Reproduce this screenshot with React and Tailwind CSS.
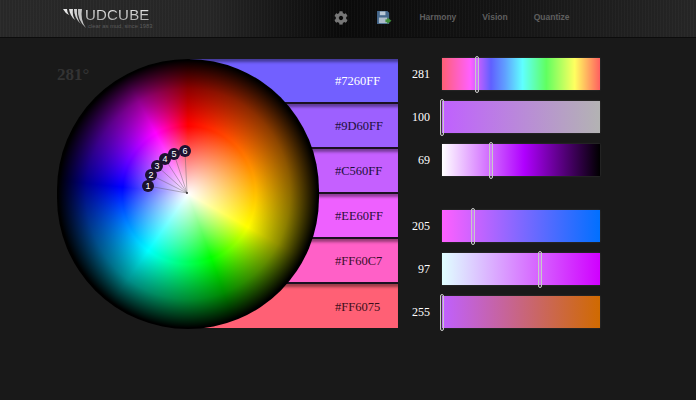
import React from 'react';
import { FaCog } from 'react-icons/fa';

const swatches = [
    { hex: '#7260FF', bg: 'bg-[#7260ff]', text: 'text-white' },
    { hex: '#9D60FF', bg: 'bg-[#9d60ff]', text: 'text-[#1c0f3a]' },
    { hex: '#C560FF', bg: 'bg-[#c560ff]', text: 'text-[#1c0f3a]' },
    { hex: '#EE60FF', bg: 'bg-[#ee60ff]', text: 'text-[#2a0f3a]' },
    { hex: '#FF60C7', bg: 'bg-[#ff60c7]', text: 'text-[#3a0f2a]' },
    { hex: '#FF6075', bg: 'bg-[#ff6075]', text: 'text-[#3a0f1a]' },
];

const sliders = [
    { value: 281, bar: 'bg-[linear-gradient(90deg,#ff6075_0%,#ff60ff_18%,#6060ff_31%,#60a0ff_40%,#60ffff_51%,#60ff60_66%,#ffff60_84%,#ff6060_100%)]', handle: 'ml-[33px]', group: 'mt-[-1px]' },
    { value: 100, bar: 'bg-[linear-gradient(90deg,#c060ff,#b3b3b3)]', handle: 'ml-[-2px]', group: 'mt-[11px]' },
    { value: 69, bar: 'bg-[linear-gradient(90deg,#ffffff_0%,#b000ff_52%,#000000_100%)]', handle: 'ml-[47px]', group: 'mt-[11px]' },
    { value: 205, bar: 'bg-[linear-gradient(90deg,#ff60ff,#0070ff)]', handle: 'ml-[29px]', group: 'mt-[34px]' },
    { value: 97, bar: 'bg-[linear-gradient(90deg,#e0ffff,#d000ff)]', handle: 'ml-[96px]', group: 'mt-[11px]' },
    { value: 255, bar: 'bg-[linear-gradient(90deg,#c060ff,#d06a00)]', handle: 'ml-[-2px]', group: 'mt-[11px]' },
];

const pins = [
    { n: 1, x: 91, y: 127 },
    { n: 2, x: 94, y: 116 },
    { n: 3, x: 100, y: 107 },
    { n: 4, x: 108, y: 100 },
    { n: 5, x: 117, y: 95 },
    { n: 6, x: 128, y: 92 },
];

const navLink = "text-[8.5px] font-bold text-[#5f5f5f] font-['Liberation_Sans',sans-serif]";

const Logo = () => (
    <div className="flex items-start">
        <svg width="23" height="20" viewBox="0 0 23 20" className="mt-[9px] shrink-0">
            <path d="M0 0 L4 0 Q4 3 6 6 Q2 4 0 0 Z" fill="#e8e8e8" />
            <path d="M6 0 L10 0 Q9 6 12 11 Q7 7 6 0 Z" fill="#dedede" />
            <path d="M11 0 L14 0 Q13 9 18 15 Q11 9 11 0 Z" fill="#d2d2d2" />
            <path d="M15 0 L19 0 Q17 11 23 19 Q14 11 15 0 Z" fill="#c2c2c2" />
        </svg>
        <div className="mt-[6px] ml-[-1px]">
            <div className="font-['Liberation_Sans',sans-serif] text-[15px] leading-[17px] tracking-[0.2px] text-transparent bg-clip-text bg-[linear-gradient(180deg,#f6f6f6,#a0a0a0)]">
                UDCUBE
            </div>
            <div className="font-['Liberation_Sans',sans-serif] text-[5.8px] leading-[7px] ml-[3px] text-[#5c5c5c] whitespace-nowrap">
                clear as mud, since 1983
            </div>
        </div>
    </div>
);

const SaveIcon = () => (
    <svg width="15" height="14" viewBox="0 0 16 15">
        <path d="M0 0 H11 L13 2 V14 H0 Z" fill="#46688c" />
        <rect x="3" y="0.5" width="6" height="4" fill="#b9c8d6" />
        <rect x="2" y="7" width="9" height="6" fill="#aebccb" />
        <path d="M11 7 L15.5 10.5 L11 14 Z" fill="#3f8f3a" />
        <rect x="9" y="9" width="3" height="3" fill="#3f8f3a" />
    </svg>
);

const Wheel = () => (
    <div className="absolute left-[57px] top-[21px] w-[262px] h-[270px]">
        <div className="w-full h-full rounded-full [background-image:radial-gradient(closest-side,rgba(255,255,255,1)_0%,rgba(255,255,255,0)_50%,rgba(0,0,0,0)_52%,rgba(0,0,0,0.45)_78%,rgba(0,0,0,1)_99%),conic-gradient(from_0deg_at_50%_50%,#ff0000_0deg,#ff8000_60deg,#ffff00_119deg,#00ff00_160deg,#00ffff_215deg,#0000ff_276deg,#ff00ff_332deg,#ff0000_360deg)]" />
        <svg className="absolute inset-0" width="262" height="270">
            {pins.map((p) => (
                <line key={p.n} x1={p.x} y1={p.y} x2="130" y2="134" stroke="#555" strokeOpacity="0.65" strokeWidth="0.6" />
            ))}
            <circle cx="130" cy="134" r="1" fill="#333" />
        </svg>
        {pins.map((p) => (
            <div
                key={p.n}
                className="absolute w-[12px] h-[12px] -ml-[6px] -mt-[6px] rounded-full bg-[#1c1230] flex items-center justify-center text-white text-[9px] leading-none font-['Liberation_Sans',sans-serif]"
                style={{ left: p.x, top: p.y }}
            >
                {p.n}
            </div>
        ))}
    </div>
);

export default function App() {
    return (
        <div className="w-[696px] h-[400px] overflow-hidden bg-[#191919] font-['Liberation_Serif',serif]">
            <header className="h-[38px] flex pl-[63px] border-b border-[#0c0c0c] [background-image:repeating-linear-gradient(90deg,rgba(255,255,255,0.025)_0px,rgba(255,255,255,0.025)_1px,transparent_1px,transparent_3px),linear-gradient(90deg,#282828_0%,#262626_30%,#0a0a0a_49%,#131313_70%,#262626_100%)]">
                <Logo />
                <nav className="flex items-center h-[34px] pl-[182px] shrink-0">
                    <FaCog className="w-[14px] h-[14px] text-[#777777] mt-[1px]" />
                    <div className="ml-[29px] mt-[1px]"><SaveIcon /></div>
                    <span className={`ml-[27px] ${navLink}`}>Harmony</span>
                    <span className={`ml-[26px] ${navLink}`}>Vision</span>
                    <span className={`ml-[26px] ${navLink}`}>Quantize</span>
                </nav>
            </header>

            <main className="relative flex pt-[21px] pl-[190px]">
                <div className="absolute left-[57px] top-[27px] text-[17px] font-bold leading-5 text-[#333333]">281°</div>
                <div className="w-[208px] shrink-0 flex flex-col">
                    {swatches.map((s) => (
                        <div
                            key={s.hex}
                            className={`h-[45px] pl-[145px] pt-[2px] flex items-center text-[12.5px] border-b-2 border-[#1a1020] last:border-b-0 last:h-[44px] shadow-[inset_0_5px_3px_-2px_rgba(0,0,0,0.4)] ${s.bg} ${s.text}`}
                        >
                            {s.hex}
                        </div>
                    ))}
                </div>

                <div className="w-[202px] shrink-0 flex flex-col">
                    {sliders.map((s) => (
                        <div key={s.value} className={`flex items-center h-[32px] ${s.group}`}>
                            <span className="w-[32px] text-right text-[12px] text-white shrink-0">{s.value}</span>
                            <div className={`ml-[12px] w-[158px] h-[32px] shrink-0 flex items-center shadow-[0_0_2px_rgba(255,255,255,0.15)] ${s.bar}`}>
                                <div className={`w-[4px] h-[37px] rounded-[2px] border border-[#c8c8c8] bg-white/10 ${s.handle}`} />
                            </div>
                        </div>
                    ))}
                </div>

                <Wheel />
            </main>
        </div>
    );
}
